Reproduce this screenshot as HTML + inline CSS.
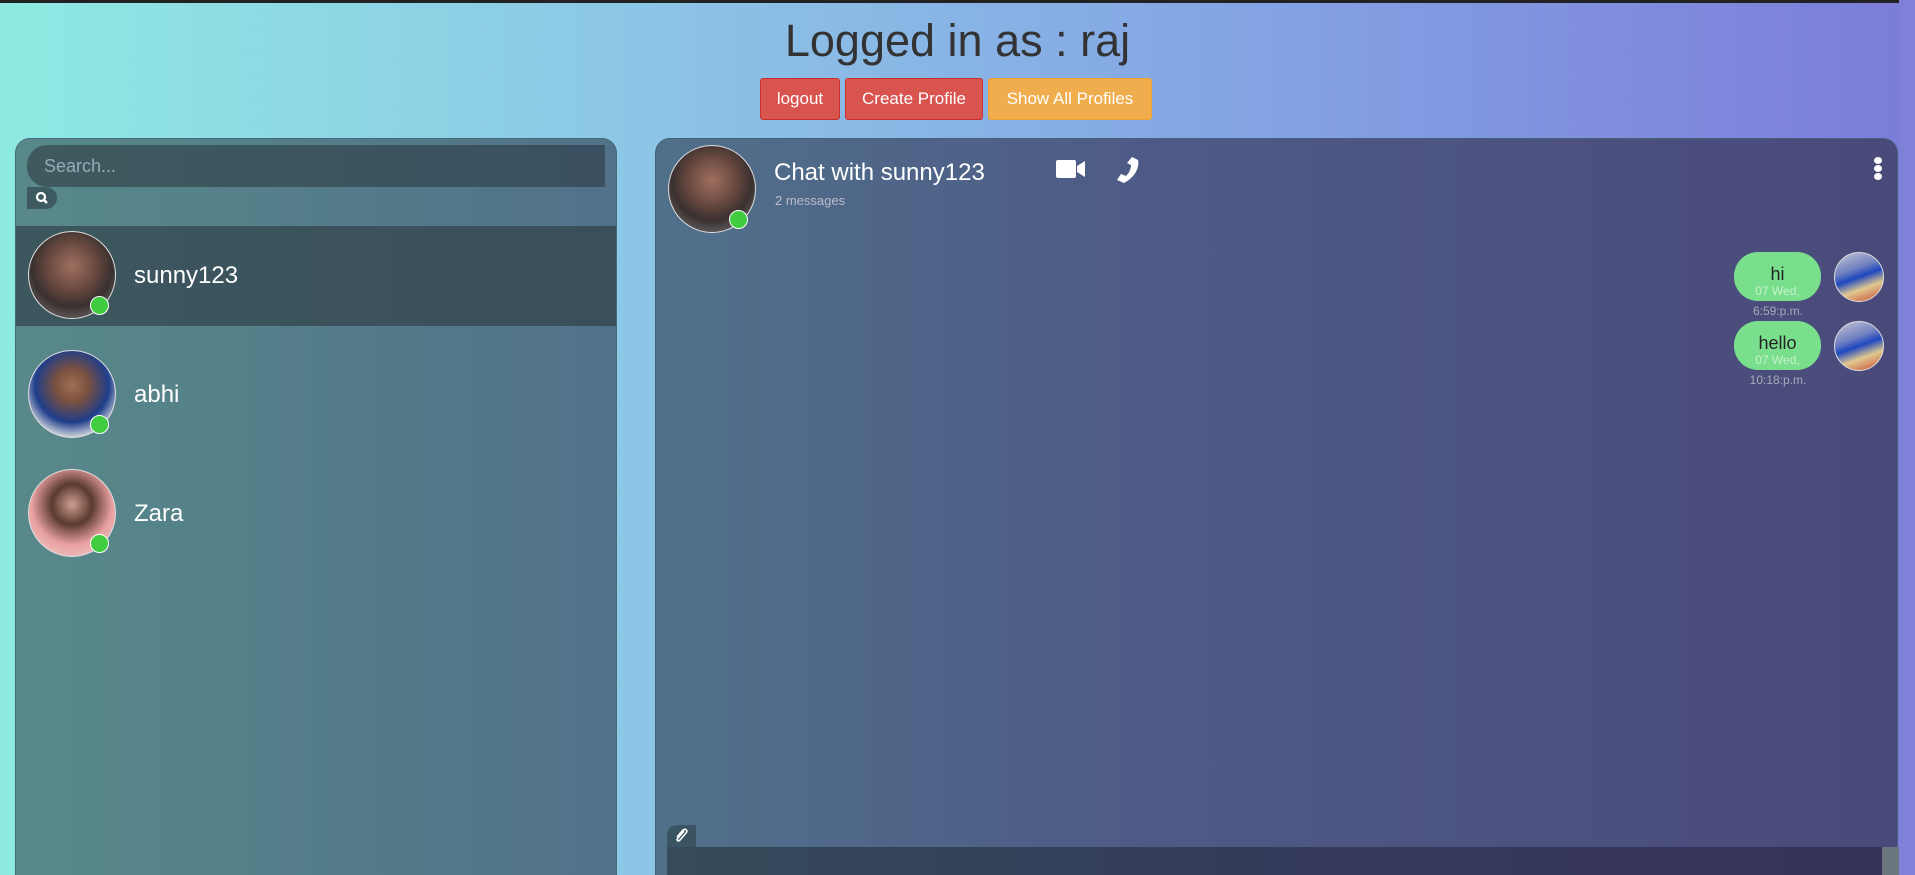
<!DOCTYPE html>
<html style="overflow:hidden;height:875px"><head><meta charset="utf-8"><style>
*{box-sizing:border-box;margin:0;padding:0}
body{width:1915px;height:875px;overflow:hidden;font-family:"Liberation Sans",Arial,sans-serif;background:linear-gradient(90deg,#8eeae2 0%,#8cc4e6 35%,#84a4e4 65%,#7b7cd8 100%);position:relative}
.abs{position:absolute}
h1{position:absolute;left:0;width:1915px;top:15px;text-align:center;font-weight:normal;font-size:45px;color:#333}
.btn{position:absolute;top:78px;height:42px;border-radius:3px;color:#fff;font-size:17px;line-height:40px;text-align:center}
.red{background:#d9534f;border:1px solid #c9302c}
.or{background:#f0ad4e;border:1px solid #eea236}
.left{left:15px;top:138px;width:602px;height:760px;border-radius:15px;background:linear-gradient(90deg,#58898a,#517189);border:1px solid #476a78}
.right{left:655px;top:138px;width:1243px;height:760px;border-radius:15px;background:linear-gradient(90deg,#50708a 0%,#4e5a86 40%,#4a4a7a 100%);border:1px solid #44607a}
.av{position:absolute;width:88px;height:88px;border-radius:50%;border:1px solid #ddd;overflow:hidden}
.dot{position:absolute;width:19px;height:19px;border-radius:50%;background:#3fcc3f;border:1px solid #fff}
.name{position:absolute;color:#fff;font-size:24px}
.bub{position:absolute;left:1734px;width:87px;height:49px;border-radius:24px;background:#7adf8c;text-align:center}
.bub b{display:block;font-weight:normal;color:#222;font-size:18px;margin-top:12px;line-height:20px}
.bub i{display:block;font-style:normal;color:#c4f2cc;font-size:12px;line-height:14px}
.tm{position:absolute;width:100px;left:1728px;text-align:center;color:#aab;font-size:12px}
.ma{position:absolute;left:1834px;width:50px;height:50px;border-radius:50%;border:1px solid #ddd;background:linear-gradient(160deg,#c9c9d6 0%,#7080c0 35%,#1e48c0 50%,#e0c890 70%,#c84830 100%)}
</style></head><body>
<div class="abs" style="left:0;top:0;width:1915px;height:3px;background:#222"></div>
<h1>Logged in as : raj</h1>
<div class="btn red" style="left:760px;width:80px">logout</div>
<div class="btn red" style="left:845px;width:138px">Create Profile</div>
<div class="btn or" style="left:988px;width:164px">Show All Profiles</div>

<div class="abs left"></div>
<div class="abs" style="left:27px;top:145px;width:578px;height:42px;border-radius:20px 0 0 20px;background:linear-gradient(90deg,#3e5a5e,#3a5060);color:#9ab;font-size:18px;line-height:42px;padding-left:17px">Search...</div>
<div class="abs" style="left:27px;top:187px;width:30px;height:22px;border-radius:0 12px 12px 0;background:#3d5a60">
<svg width="30" height="22"><circle cx="14" cy="10" r="4" stroke="#fff" stroke-width="2.2" fill="none"/><line x1="17" y1="13" x2="20" y2="16" stroke="#fff" stroke-width="2.5"/></svg></div>
<div class="abs" style="left:16px;top:226px;width:600px;height:100px;background:linear-gradient(90deg,#3c575e,#3a4e5c)"></div>

<div class="av" style="left:28px;top:231px;background:radial-gradient(circle at 50% 40%,#a07060 0%,#6a4a40 35%,#3a3030 60%,#888 100%)"></div>
<div class="dot" style="left:90px;top:296px"></div>
<div class="name" style="left:134px;top:262px">sunny123</div>

<div class="av" style="left:28px;top:350px;background:radial-gradient(circle at 50% 40%,#a07050 0%,#7a5040 25%,#1e3e8a 55%,#e8e8e8 80%)"></div>
<div class="dot" style="left:90px;top:415px"></div>
<div class="name" style="left:134px;top:381px">abhi</div>

<div class="av" style="left:28px;top:469px;background:radial-gradient(circle at 50% 40%,#d0a090 0%,#5a3a30 30%,#e8a0a0 60%,#f0d8d8 100%)"></div>
<div class="dot" style="left:90px;top:534px"></div>
<div class="name" style="left:134px;top:500px">Zara</div>

<div class="abs right"></div>
<div class="av" style="left:668px;top:145px;background:radial-gradient(circle at 50% 40%,#a07060 0%,#6a4a40 35%,#3a3030 60%,#888 100%)"></div>
<div class="dot" style="left:729px;top:210px"></div>
<div class="name" style="left:774px;top:159px">Chat with sunny123</div>
<div class="abs" style="left:775px;top:193px;color:#bbc;font-size:13px">2 messages</div>
<svg class="abs" style="left:1056px;top:158px" width="30" height="22" viewBox="0 0 30 22"><rect x="0" y="2" width="20" height="18" rx="2" fill="#fff"/><path d="M21 8 L29 3 V19 L21 14Z" fill="#fff"/></svg>
<svg class="abs" style="left:1114px;top:156px" width="28" height="28" viewBox="0 0 28 28"><path d="M18 1 L24 4 C26 12 20 22 10 27 L3 24 L7 18 L12 20 C15 17 17 13 17 9 L13 7Z" fill="#fff"/></svg>
<div class="abs" style="left:1874px;top:157px;width:9px">
<div style="width:8px;height:7px;border-radius:50%;background:#fff;margin-bottom:1px"></div>
<div style="width:8px;height:7px;border-radius:50%;background:#fff;margin-bottom:1px"></div>
<div style="width:8px;height:7px;border-radius:50%;background:#fff"></div></div>

<div class="bub" style="top:252px"><b>hi</b><i>07 Wed,</i></div>
<div class="tm" style="top:304px">6:59:p.m.</div>
<div class="ma" style="top:252px"></div>
<div class="bub" style="top:321px"><b>hello</b><i>07 Wed,</i></div>
<div class="tm" style="top:373px">10:18:p.m.</div>
<div class="ma" style="top:321px"></div>

<div class="abs" style="left:667px;top:825px;width:29px;height:22px;border-radius:10px 0 0 0;background:#3b5464">
<svg width="29" height="22"><path d="M17 6 L11 13 C9 15 11 17 13 15 L19 8 C21 6 19 3 16 5 L10 12" stroke="#fff" stroke-width="1.6" fill="none"/></svg></div>
<div class="abs" style="left:667px;top:847px;width:1215px;height:28px;background:linear-gradient(90deg,#354a5a,#353b5a 50%,#35325a)"></div>
<div class="abs" style="left:1882px;top:847px;width:20px;height:28px;background:#6b7580"></div>
<div class="abs" style="left:1899px;top:0;width:16px;height:875px;background:#8080d8"></div>
</body></html>
